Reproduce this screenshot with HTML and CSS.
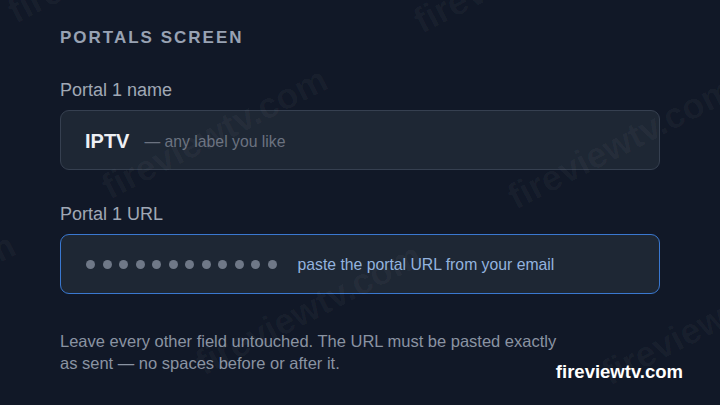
FILE: index.html
```html
<!DOCTYPE html>
<html lang="en">
<head>
<meta charset="utf-8">
<title>Portals screen</title>
<link rel="stylesheet" href="styles.css">
</head>
<body>
<main class="screen">
  <h1 class="heading">PORTALS SCREEN</h1>

  <label class="field-label">Portal 1 name</label>
  <div class="field">
    <span class="field-value">IPTV</span>
    <span class="field-hint">— any label you like</span>
  </div>

  <label class="field-label field-label--second">Portal 1 URL</label>
  <div class="field field--focus">
    <span class="dots">
      <i class="dot"></i><i class="dot"></i><i class="dot"></i><i class="dot"></i>
      <i class="dot"></i><i class="dot"></i><i class="dot"></i><i class="dot"></i>
      <i class="dot"></i><i class="dot"></i><i class="dot"></i><i class="dot"></i>
    </span>
    <span class="field-placeholder">paste the portal URL from your email</span>
  </div>

  <p class="note">Leave every other field untouched. The URL must be pasted exactly<br>as sent — no spaces before or after it.</p>
</main>

<div class="watermarks" aria-hidden="true">
  <span class="wm wm1">fireviewtv.com</span>
  <span class="wm wm2">fireviewtv.com</span>
  <span class="wm wm3">fireviewtv.com</span>
  <span class="wm wm4">fireviewtv.com</span>
  <span class="wm wm5">fireviewtv.com</span>
  <span class="wm wm6">fireviewtv.com</span>
  <span class="wm wm7">fireviewtv.com</span>
</div>

<div class="brand">fireviewtv.com</div>
</body>
</html>
```

FILE: styles.css
```css
html, body {
  margin: 0;
  padding: 0;
}

body {
  width: 720px;
  height: 405px;
  overflow: hidden;
  position: relative;
  background: #111827;
  font-family: "Liberation Sans", Arial, sans-serif;
}

.screen {
  display: flex;
  flex-direction: column;
  padding: 28px 60px 0 60px;
}

.heading {
  margin: 0;
  font-size: 17px;
  line-height: 20px;
  font-weight: 700;
  letter-spacing: 2px;
  color: #98a2b3;
}

.field-label {
  display: block;
  margin-top: 31px;
  margin-bottom: 9px;
  font-size: 18px;
  line-height: 22px;
  color: #a0a8b5;
}

.field-label--second {
  margin-top: 33px;
}

.field {
  box-sizing: border-box;
  height: 60px;
  display: flex;
  align-items: center;
  padding: 0 24px;
  background: #1e2734;
  border: 1px solid #364050;
  border-radius: 9px;
}

.field-value {
  font-size: 20px;
  line-height: 24px;
  font-weight: 700;
  color: #eef0f4;
  margin-top: 2px;
}

.field-hint {
  margin-left: 15px;
  font-size: 15.75px;
  line-height: 24px;
  color: #6b7280;
  margin-top: 4px;
}

.field--focus {
  border: 1.5px solid #3a78d0;
  padding-left: 25px;
}

.dots {
  display: flex;
  align-items: center;
  gap: 7.5px;
}

.dot {
  display: block;
  width: 9px;
  height: 9px;
  border-radius: 50%;
  background: #6f7887;
}

.field-placeholder {
  margin-left: 21px;
  font-size: 15.75px;
  line-height: 20px;
  color: #93b3df;
  margin-top: 2px;
}

.note {
  margin: 36px 0 0 0;
  font-size: 16.5px;
  line-height: 22.3px;
  color: #8a93a2;
}

.brand {
  position: absolute;
  right: 37px;
  bottom: 24px;
  font-size: 18.5px;
  line-height: 1;
  font-weight: 700;
  color: #ffffff;
}

.watermarks {
  position: absolute;
  inset: 0;
  overflow: hidden;
  pointer-events: none;
}

.wm {
  position: absolute;
  font-size: 36px;
  line-height: 1;
  font-weight: 700;
  white-space: nowrap;
  color: rgba(255, 255, 255, 0.035);
  transform-origin: 0 30.5px;
  transform: rotate(-27deg);
}

.wm1 { left: 16px;   top: -6.5px; }
.wm2 { left: 422px;  top: 3.5px; }
.wm3 { left: 110px;  top: 169.5px; }
.wm4 { left: 516px;  top: 179.5px; }
.wm5 { left: 204px;  top: 345.5px; }
.wm6 { left: 610px;  top: 355.5px; }
.wm7 { left: -202px; top: 335.5px; }
```
